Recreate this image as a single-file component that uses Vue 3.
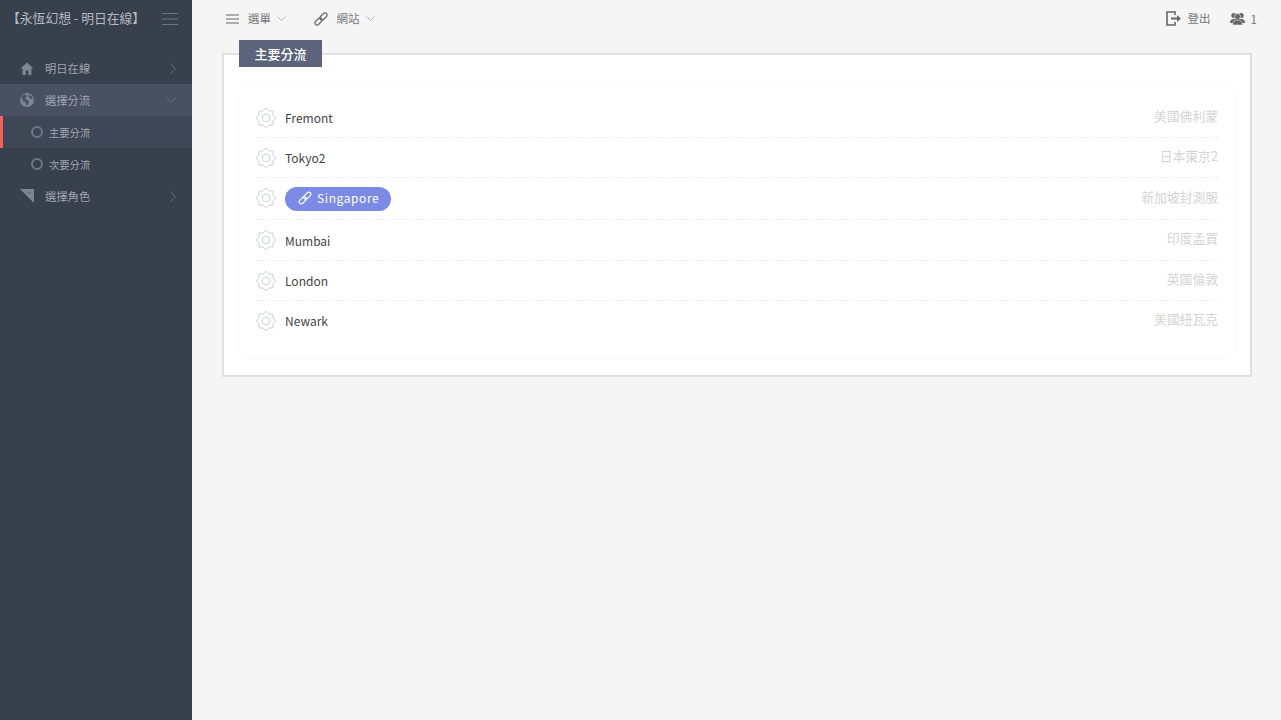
<script setup>
const sub = ['主要分流', '次要分流']
const rows = [
  { name: 'Fremont', note: '美國佛利蒙' },
  { name: 'Tokyo2', note: '日本東京2' },
  { name: 'Singapore', note: '新加坡封測服', active: true },
  { name: 'Mumbai', note: '印度孟買', wide: true },
  { name: 'London', note: '英國倫敦' },
  { name: 'Newark', note: '美國紐瓦克' },
]
const gearPoints = Array.from({ length: 16 }, (_, i) => {
  const a = (i * Math.PI) / 8 - Math.PI / 2
  const r = i % 2 ? 7.6 : 9.8
  return `${(10 + r * Math.cos(a)).toFixed(2)},${(10 + r * Math.sin(a)).toFixed(2)}`
}).join(' ')
</script>

<template>
  <div class="layout">
    <aside class="side">
      <div class="brand">
        <span class="brand-text">【永恆幻想 - 明日在線】</span>
        <svg class="burger" width="16" height="12" viewBox="0 0 16 12"><path d="M0 .5h16M0 6h16M0 11.5h16" stroke="#6f7786" fill="none"/></svg>
      </div>
      <nav class="nav">
        <div class="item">
          <svg class="ic" width="14" height="13" viewBox="0 0 14 13"><path d="M7 .5L.5 6.500h2V13h3.300V8.500h2.400V13h3.300V6.500h2z" fill="#7d8593"/></svg>
          <span>明日在線</span>
          <svg width="6" height="11" viewBox="0 0 6 11"><path d="M.5.500L5.500 5.500.5 10.500" stroke="#667080" fill="none"/></svg>
        </div>
        <div class="item open">
          <svg class="ic" width="14" height="14" viewBox="0 0 14 14"><circle cx="7" cy="7" r="7" fill="#7d8593"/><path d="M1.500 3.500L4 1.500l2.500.5.500 1.500L5.500 5l.5 1.500 2.500 1 .5 1.500-1 2.500-1.500 1-1-3-2.500-1.500-1-2.500zM9 1.500l3 2 .7 3-1.700-.5-1.500-1-1-1.500z" fill="#4a5263"/></svg>
          <span>選擇分流</span>
          <svg width="10" height="6" viewBox="0 0 10 6"><path d="M.5.500L5 5.500 9.500.5" stroke="#667080" fill="none"/></svg>
        </div>
        <div v-for="(s, i) in sub" :key="s" class="subitem" :class="{ on: i === 0 }">
          <i class="dot"></i><span>{{ s }}</span>
        </div>
        <div class="item">
          <svg class="ic" width="14" height="14" viewBox="0 0 14 14"><path d="M0 0h14v14z" fill="#7d8593"/><path d="M8 3.500l1.500 1.500L11 3.500" stroke="#4a5263" fill="none"/></svg>
          <span>選擇角色</span>
          <svg width="6" height="11" viewBox="0 0 6 11"><path d="M.5.500L5.500 5.500.5 10.500" stroke="#667080" fill="none"/></svg>
        </div>
      </nav>
    </aside>

    <main class="main">
      <header class="top">
        <div class="top-item menu-first">
          <svg class="lead" width="13" height="10" viewBox="0 0 13 10"><path d="M0 1h13M0 5h13M0 9h13" stroke="#666" stroke-width="1.200" fill="none"/></svg>
          <span class="label">選單</span>
          <svg class="caret" width="9" height="5" viewBox="0 0 9 5"><path d="M.5.500L4.500 4.500 8.500.5" stroke="#b5b5b5" fill="none"/></svg>
        </div>
        <div class="top-item">
          <svg class="lead" width="14" height="14" viewBox="0 0 14 14"><g fill="none" stroke="#666" stroke-width="1.200"><rect x="-4.200" y="-2.100" width="8.400" height="4.200" rx="2.100" transform="translate(9.500 4.500) rotate(-45)"/><rect x="-4.200" y="-2.100" width="8.400" height="4.200" rx="2.100" transform="translate(4.500 9.500) rotate(-45)"/></g></svg>
          <span class="label">網站</span>
          <svg class="caret" width="9" height="5" viewBox="0 0 9 5"><path d="M.5.500L4.500 4.500 8.500.5" stroke="#b5b5b5" fill="none"/></svg>
        </div>
        <div class="top-right">
          <div class="top-item logout">
            <svg width="15" height="15" viewBox="0 0 15 15"><path d="M9 4V1H1v13h8v-3" stroke="#666" stroke-width="1.600" fill="none"/><path d="M5 6.500h6V4l4 3.500L11 11V8.500H5z" fill="#666"/></svg>
            <span class="label">登出</span>
          </div>
          <div class="top-item users">
            <svg width="15" height="13" viewBox="0 0 15 13"><circle cx="3.800" cy="3.500" r="2.500" fill="#666"/><circle cx="11.200" cy="3.500" r="2.500" fill="#666"/><circle cx="7.500" cy="4.500" r="3" fill="#666" stroke="#f5f5f5" stroke-width=".6"/><path d="M0 11c0-3 1.500-4 3.500-4h8c2 0 3.500 1 3.500 4z" fill="#666"/><path d="M2.500 13c0-3.500 2-5 5-5s5 1.500 5 5z" fill="#666" stroke="#f5f5f5" stroke-width=".6"/></svg>
            <span class="num">1</span>
          </div>
        </div>
      </header>

      <section class="panel">
        <div class="tag">主要分流</div>
        <div class="card">
          <div v-for="r in rows" :key="r.name" class="row" :class="{ tall: r.active, wide: r.wide }">
            <svg class="gear" width="20" height="20" viewBox="0 0 20 20"><polygon :points="gearPoints" fill="none" stroke="#cdd0d7"/><circle cx="10" cy="10" r="3.800" fill="none" stroke="#cdd0d7"/></svg>
            <span v-if="r.active" class="pill">
              <svg width="14" height="14" viewBox="0 0 14 14"><g fill="none" stroke="#fff" stroke-width="1.200"><rect x="-4.200" y="-2.100" width="8.400" height="4.200" rx="2.100" transform="translate(9.300 4.700) rotate(-45)"/><rect x="-4.200" y="-2.100" width="8.400" height="4.200" rx="2.100" transform="translate(4.700 9.300) rotate(-45)"/></g></svg>
              {{ r.name }}
            </span>
            <span v-else class="name">{{ r.name }}</span>
            <span class="note">{{ r.note }}</span>
          </div>
        </div>
      </section>
    </main>
  </div>
</template>

<style scoped>
.layout {
  display: flex;
  min-height: 720px;
  font-family: "Noto Sans CJK TC", "Noto Sans", sans-serif;
  font-size: 13px;
  background: #f5f5f5;
  overflow: hidden;
}
.side {
  width: 192px;
  flex: none;
  background: #383f4d;
  color: #a0a6b2;
}
.brand {
  height: 36px;
  display: flex;
  align-items: center;
  justify-content: space-between;
  padding: 0 14px 0 7px;
  color: #b4b8c0;
}
.brand-text {
  font-size: 12.800px;
  white-space: nowrap;
  margin-top: -2px;
}
.burger {
  margin-top: 2px;
}
.nav {
  margin-top: 16px;
}
.item {
  height: 32px;
  display: flex;
  align-items: center;
  font-size: 11.300px;
  padding: 0 16px 0 20px;
}
.item .ic {
  width: 14px;
  margin-right: 11px;
  flex: none;
}
.item span {
  flex: 1;
  color: #a0a6b2;
  margin-top: -1px;
}
.item.open {
  background: #485062;
}
.subitem {
  height: 32px;
  display: flex;
  align-items: center;
  padding-left: 31px;
  font-size: 10.300px;
  gap: 6px;
}
.subitem.on {
  background: #3f4655;
  box-shadow: inset 3px 0 0 #f0645a;
}
.dot {
  width: 12px;
  height: 12px;
  box-sizing: border-box;
  border: 2px solid #6f7886;
  border-radius: 50%;
}
.main {
  flex: 1;
  min-width: 0;
  padding: 0 29px 0 30px;
}
.top {
  height: 37px;
  display: flex;
  align-items: center;
  color: #777;
  font-size: 11.500px;
}
.top-item {
  display: flex;
  align-items: center;
  gap: 7px;
}
.lead {
  margin-right: 2px;
}
.label {
  margin-top: -1px;
}
.caret {
  margin-left: -1px;
}
.menu-first {
  margin-left: 4px;
  margin-right: 27.500px;
}
.top-right {
  margin-left: auto;
  display: flex;
}
.logout {
  margin-right: 19px;
}
.users {
  margin-right: -5px;
  gap: 6px;
}
.num {
  color: #777;
}
.panel {
  position: relative;
  margin-top: 16px;
  height: 324px;
  box-sizing: border-box;
  background: #fff;
  border: 2px solid #e0e0e0;
  padding: 30px 15px 0 16px;
}
.tag {
  position: absolute;
  left: 15px;
  top: -15px;
  width: 83px;
  height: 27px;
  display: flex;
  align-items: center;
  justify-content: center;
  background: #5b647a;
  color: #fff;
  font-size: 13px;
  font-weight: 500;
}
.card {
  padding: 13px 17px 16px 16px;
  height: 272px;
  box-sizing: border-box;
  border-radius: 6px;
  box-shadow: 0 0 4px rgba(0, 0, 0, 0.03);
}
.row {
  height: 40px;
  box-sizing: border-box;
  display: flex;
  align-items: center;
  border-bottom: 1px dashed #eeeeee;
}
.row:last-child {
  border-bottom: 0;
}
.row.tall {
  height: 42px;
}
.row.tall .gear {
  margin-top: -1px;
}
.row.wide {
  height: 41px;
}
.gear {
  flex: none;
  margin-right: 9px;
}
.name {
  flex: 1;
  color: #444;
  font-size: 12px;
}
.row:last-child .name {
  margin-top: -2px;
}
.pill {
  display: inline-flex;
  align-items: center;
  gap: 5px;
  height: 24px;
  padding: 0 12px 2px 13px;
  box-sizing: border-box;
  border-radius: 12px;
  background: #7b8ae4;
  color: #fff;
  font-size: 12px;
  letter-spacing: 0.6px;
}
.row.tall .note {
  margin-left: auto;
}
.note {
  color: #d4d4d4;
  font-size: 12.800px;
  padding-bottom: 5px;
}
</style>
